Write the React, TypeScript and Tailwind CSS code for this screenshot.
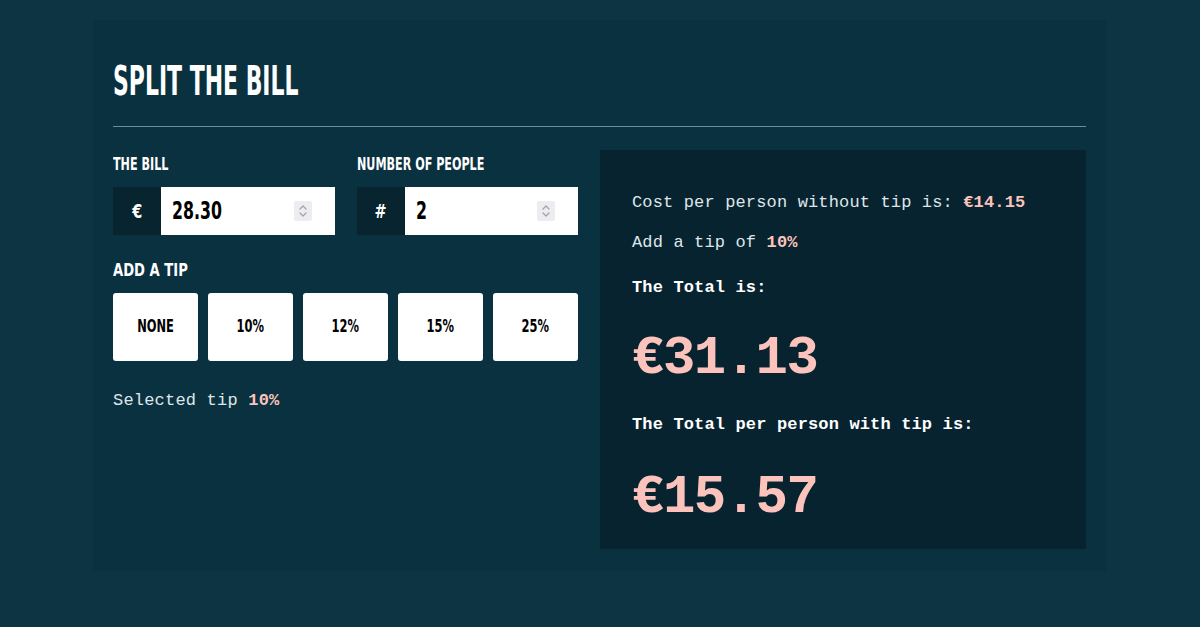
import React from "react";

const narrow = "font-['Liberation_Sans_Narrow','DejaVu_Sans_Condensed','Liberation_Sans',sans-serif]";
const mono = "font-['Liberation_Mono','DejaVu_Sans_Mono',monospace]";

function Spinner() {
  return (
    <div className="flex h-[20px] w-[18px] items-center justify-center rounded-[2px] bg-[#ececf1]">
      <svg width="10" height="14" viewBox="0 0 10 14" fill="none" stroke="#a3a3ab" strokeWidth="1.3" strokeLinecap="round" strokeLinejoin="round">
        <path d="M2 5 L5 2 L8 5" />
        <path d="M2 9 L5 12 L8 9" />
      </svg>
    </div>
  );
}

function InputGroup({ label, prefix, value }: { label: string; prefix: string; value: string }) {
  return (
    <div className="flex flex-col">
      <div className={`${narrow} mt-[6px] text-[17px] leading-[17px] font-semibold text-white`}>
        <span className="inline-block origin-left scale-x-[0.73] whitespace-nowrap">{label}</span>
      </div>
      <div className="mt-[14px] flex h-[48px]">
        <div className={`${narrow} flex w-[48px] items-center justify-center bg-[#07242f] text-[20px] font-semibold text-white`}>
          <span className="inline-block scale-x-[0.8]">{prefix}</span>
        </div>
        <div className="flex flex-1 items-center justify-between bg-white pl-[11px] pr-[23px]">
          <span className={`${narrow} inline-block origin-left scale-x-[0.73] text-[24px] leading-none font-semibold text-black`}>{value}</span>
          <Spinner />
        </div>
      </div>
    </div>
  );
}

export default function App() {
  const tips = ["NONE", "10%", "12%", "15%", "25%"];
  return (
    <div className="min-h-[627px] w-full bg-[#0c3443] pt-5">
      <div className="ml-[93px] w-[1013px] bg-[#0a313f] px-5 pt-[41px] pb-[22px]">
        <h1 className={`${narrow} text-[40px] leading-[40px] tracking-[0px] font-semibold text-white`}>
          <span className="inline-block origin-left scale-x-[0.61] whitespace-nowrap">SPLIT THE BILL</span>
        </h1>
        <div className="mt-[25px] border-t border-[#6f8d97]" />
        <div className="mt-[23px] flex gap-[22px]">
          <div className="flex w-[465px] flex-col">
            <div className="grid grid-cols-2 gap-x-[22px]">
              <InputGroup label="THE BILL" prefix="€" value="28.30" />
              <InputGroup label="NUMBER OF PEOPLE" prefix="#" value="2" />
            </div>
            <div className={`${narrow} mt-[27px] text-[17px] leading-[17px] font-semibold text-white`}>
              <span className="inline-block origin-left scale-x-[0.86] whitespace-nowrap">ADD A TIP</span>
            </div>
            <div className="mt-[14px] grid grid-cols-5 gap-[10px]">
              {tips.map((t) => (
                <div
                  key={t}
                  className={`${narrow} flex h-[68px] items-center justify-center rounded-[3px] bg-white text-[17px] font-semibold text-black`}
                >
                  <span className="inline-block scale-x-[0.75]">{t}</span>
                </div>
              ))}
            </div>
            <div className={`${mono} mt-[31px] text-[17px] leading-[17px] tracking-[0.2px] text-[#dfe6e9]`}>
              Selected tip <span className="font-bold text-[#fcc3bc]">10%</span>
            </div>
          </div>
          <div className={`${mono} flex flex-1 flex-col bg-[#072330] px-8 pt-[44px] pb-[24px]`}>
            <div className="text-[17px] leading-[17px] tracking-[0.15px] text-[#dfe6e9]">
              Cost per person without tip is: <span className="font-bold text-[#fcc3bc]">€14.15</span>
            </div>
            <div className="mt-[23px] text-[17px] leading-[17px] tracking-[0.15px] text-[#dfe6e9]">
              Add a tip of <span className="font-bold text-[#fcc3bc]">10%</span>
            </div>
            <div className="mt-[28px] text-[17px] leading-[17px] tracking-[0.15px] font-bold text-white">The Total is:</div>
            <div className="mt-[36px] text-[54px] leading-[54px] tracking-[-1.5px] font-bold text-[#fcc3bc]">€31.13</div>
            <div className="mt-[30px] text-[17px] leading-[17px] tracking-[0.15px] font-bold text-white">
              The Total per person with tip is:
            </div>
            <div className="mt-[38px] text-[54px] leading-[54px] tracking-[-1.5px] font-bold text-[#fcc3bc]">€15.57</div>
          </div>
        </div>
      </div>
    </div>
  );
}
